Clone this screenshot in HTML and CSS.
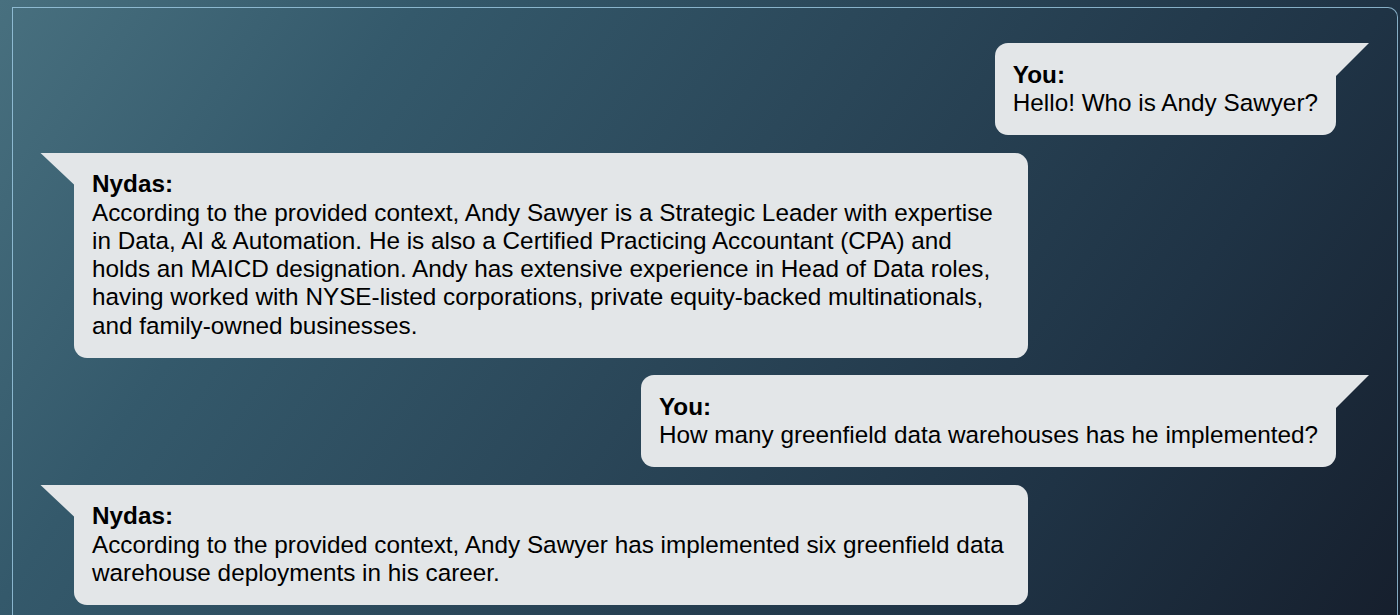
FILE: index.html
```html
<!DOCTYPE html>
<html lang="en">
<head>
<meta charset="utf-8">
<title>Nydas chat</title>
<link rel="stylesheet" href="styles.css">
</head>
<body>
  <div class="frame">
    <div class="chat">
      <div class="msg you">
        <div class="who">You:</div>
        <div class="text">Hello! Who is Andy Sawyer?</div>
      </div>
      <div class="msg bot">
        <div class="who">Nydas:</div>
        <div class="text">According to the provided context, Andy Sawyer is a Strategic Leader with expertise in Data, AI &amp; Automation. He is also a Certified Practicing Accountant (CPA) and holds an MAICD designation. Andy has extensive experience in Head of Data roles, having worked with NYSE-listed corporations, private equity-backed multinationals, and family-owned businesses.</div>
      </div>
      <div class="msg you">
        <div class="who">You:</div>
        <div class="text">How many greenfield data warehouses has he implemented?</div>
      </div>
      <div class="msg bot">
        <div class="who">Nydas:</div>
        <div class="text">According to the provided context, Andy Sawyer has implemented six greenfield data warehouse deployments in his career.</div>
      </div>
    </div>
  </div>
</body>
</html>
```
FILE: styles.css
```css
html, body {
  margin: 0;
  padding: 0;
  width: 1400px;
  height: 615px;
  overflow: hidden;
}

body {
  background: linear-gradient(125deg, #48707f 0%, #34596b 23%, #2a4658 50%, #1f3345 76%, #161f2d 100%);
  font-family: "Liberation Sans", Arial, sans-serif;
}

.frame {
  margin: 7px 2px 0 12px;
  height: 608px;
  box-sizing: border-box;
  border: 1px solid rgba(160, 205, 230, 0.8);
  border-bottom: 0;
  border-top-right-radius: 10px;
  padding: 35px 28px 0 27px;
}

.chat {
  display: flex;
  flex-direction: column;
  gap: 17.5px;
}

.msg {
  position: relative;
  background: #e3e6e8;
  color: #000;
  border-radius: 13px;
  padding: 17.75px 18px 17.75px 18px;
  font-size: 24.3px;
  line-height: 28.25px;
}

.who {
  font-weight: bold;
}

.msg.you {
  align-self: flex-end;
  margin-right: 33px;
  border-top-right-radius: 0;
}

.msg.you::after {
  content: "";
  position: absolute;
  top: 0;
  right: -33px;
  width: 34px;
  height: 34px;
  background: #e3e6e8;
  clip-path: polygon(0 0, 100% 0, 0 100%);
}

.msg.bot {
  align-self: flex-start;
  margin-left: 34px;
  width: 954px;
  box-sizing: border-box;
  border-top-left-radius: 0;
}

.msg.bot::after {
  content: "";
  position: absolute;
  top: 0;
  left: -34px;
  width: 35px;
  height: 33px;
  background: #e3e6e8;
  clip-path: polygon(0 0, 100% 0, 100% 100%);
}
```
